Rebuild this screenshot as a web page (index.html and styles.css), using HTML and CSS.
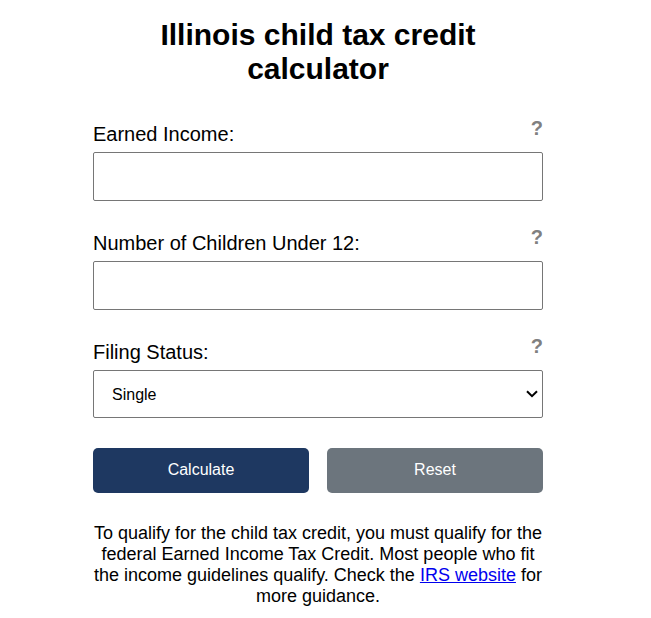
FILE: index.html
```html
<!DOCTYPE html>
<html lang="en">
<head>
<meta charset="utf-8">
<meta name="viewport" content="width=device-width, initial-scale=1">
<title>Illinois child tax credit calculator</title>
<link rel="stylesheet" href="styles.css">
</head>
<body>
<main class="calculator">
  <h1 class="title">Illinois child tax credit calculator</h1>
  <form class="form">
    <div class="field">
      <div class="field-head">
        <label for="income">Earned Income:</label>
        <span class="help">?</span>
      </div>
      <input class="control" id="income" type="text">
    </div>
    <div class="field">
      <div class="field-head">
        <label for="children">Number of Children Under 12:</label>
        <span class="help">?</span>
      </div>
      <input class="control" id="children" type="text">
    </div>
    <div class="field">
      <div class="field-head">
        <label for="status">Filing Status:</label>
        <span class="help">?</span>
      </div>
      <div class="select-wrap">
        <select class="control" id="status">
          <option>Single</option>
          <option>Married Filing Jointly</option>
          <option>Head of Household</option>
        </select>
        <svg class="chevron" viewBox="0 0 12 8" width="12" height="8" aria-hidden="true"><path d="M1 1.2 6 6.2 11 1.2" fill="none" stroke="#000" stroke-width="2"/></svg>
      </div>
    </div>
    <div class="actions">
      <button class="button primary" type="button">Calculate</button>
      <button class="button secondary" type="reset">Reset</button>
    </div>
  </form>
  <p class="note">To qualify for the child tax credit, you must qualify for the federal Earned Income Tax Credit. Most people who fit the income guidelines qualify. Check the <a href="#">IRS website</a> for more guidance.</p>
</main>
</body>
</html>
```
FILE: styles.css
```css
* {
  box-sizing: border-box;
}

body {
  margin: 0;
  padding: 18px 15px 12px 0;
  background: #fff;
  color: #000;
  font-family: "Liberation Sans", Arial, sans-serif;
}

.calculator {
  max-width: 450px;
  margin: 0 auto;
}

.title {
  margin: 0 0 32px;
  font-size: 30px;
  line-height: 34px;
  text-align: center;
}

.field {
  margin-bottom: 26px;
}

.field-head {
  display: flex;
  justify-content: space-between;
  height: 34px;
  font-size: 20px;
  line-height: 24px;
}

.field-head label {
  padding-top: 4px;
}

.help {
  color: #808080;
  font-weight: bold;
  line-height: 20px;
  cursor: help;
}

.control {
  display: block;
  width: 100%;
  height: 49px;
  padding: 0 18px;
  border: 1px solid #767676;
  border-radius: 2px;
  background: #fff;
  color: #000;
  font-family: inherit;
  font-size: 16px;
}

.select-wrap {
  position: relative;
}

select.control {
  height: 48px;
  appearance: none;
}

.chevron {
  position: absolute;
  top: 20px;
  right: 5px;
  pointer-events: none;
}

.actions {
  display: flex;
  gap: 18px;
  padding-top: 4px;
}

.button {
  flex: 1;
  height: 45px;
  padding: 0 0 2px;
  border: 0;
  border-radius: 5px;
  color: #fff;
  font-family: inherit;
  font-size: 16px;
  cursor: pointer;
}

.primary {
  background: #1e3861;
}

.secondary {
  background: #6c757d;
}

.note {
  margin: 30px 0 0;
  font-size: 18px;
  line-height: 21px;
  text-align: center;
}

.note a {
  color: #0000ee;
}
```
